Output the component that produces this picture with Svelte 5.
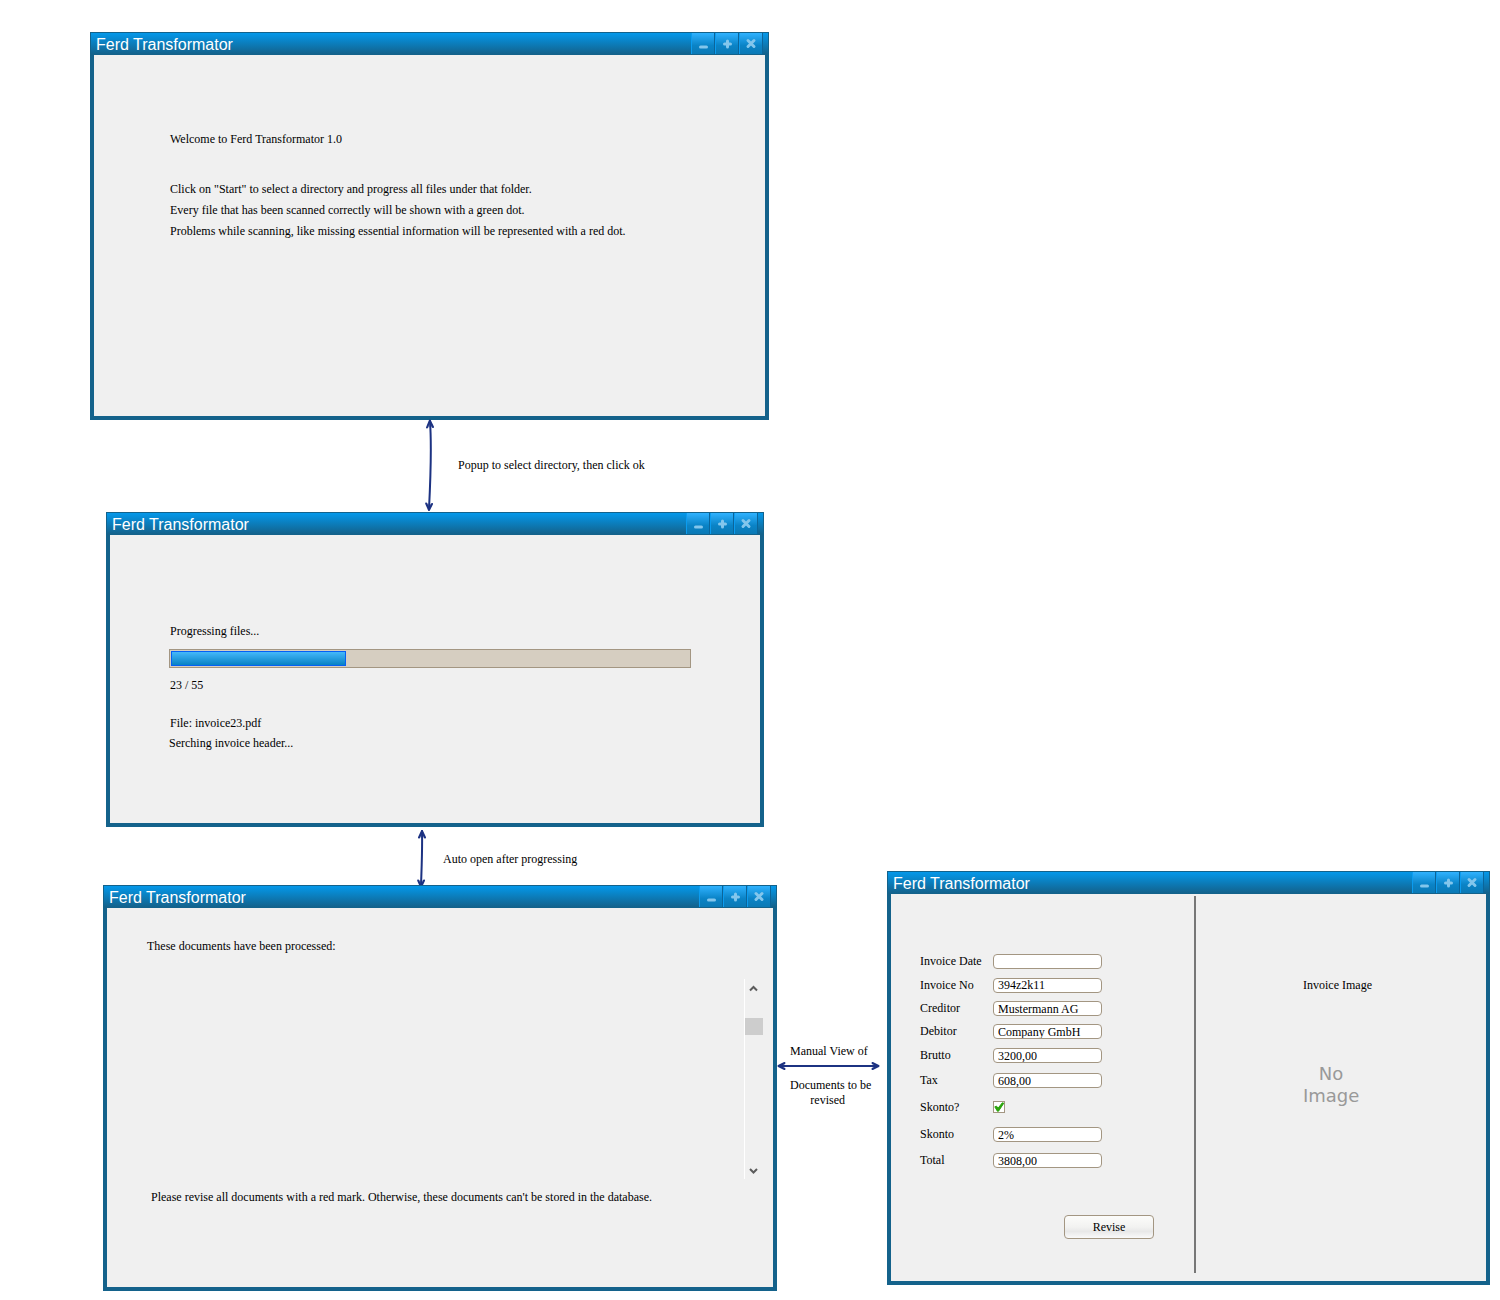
<script>
  const title = 'Ferd Transformator';

  const windows = [
    { id: 'welcome', x: 90, y: 32, w: 679, h: 388 },
    { id: 'progress', x: 106, y: 512, w: 658, h: 315 },
    { id: 'documents', x: 103, y: 885, w: 674, h: 406 },
    { id: 'invoice', x: 887, y: 871, w: 603, h: 414 }
  ];

  const fields = [
    { id: 'date', label: 'Invoice Date', value: '' },
    { id: 'number', label: 'Invoice No', value: '394z2k11' },
    { id: 'creditor', label: 'Creditor', value: 'Mustermann AG' },
    { id: 'debitor', label: 'Debitor', value: 'Company GmbH' },
    { id: 'brutto', label: 'Brutto', value: '3200,00' },
    { id: 'tax', label: 'Tax', value: '608,00' },
    { id: 'has-skonto', label: 'Skonto?', checked: true },
    { id: 'skonto', label: 'Skonto', value: '2%' },
    { id: 'total', label: 'Total', value: '3808,00' }
  ];

  const notes = [
    { x: 458, y: 458, lines: 'Popup to select directory, then click ok' },
    { x: 443, y: 852, lines: 'Auto open after progressing' },
    { x: 790, y: 1044, lines: 'Manual View of' },
    { x: 790, y: 1078, lines: 'Documents to be\nrevised  ' }
  ];
</script>

{#snippet welcome()}
  <div class="body welcome">
    <p class="lead">Welcome to Ferd Transformator 1.0</p>
    <p>Click on "Start" to select a directory and progress all files under that folder.</p>
    <p>Every file that has been scanned correctly will be shown with a green dot.</p>
    <p>Problems while scanning, like missing essential information will be represented with a red dot.</p>
  </div>
{/snippet}

{#snippet progress()}
  <div class="body progress">
    <label for="files">Progressing files...</label>
    <progress id="files" max="1000" value="337"></progress>
    <p class="count">23 / 55</p>
    <p>File: invoice23.pdf</p>
    <p>Serching invoice header...</p>
  </div>
{/snippet}

{#snippet documents()}
  <div class="body documents">
    <p>These documents have been processed:</p>
    <div class="list">
      <div class="scrollbar">
        <button type="button" aria-label="Scroll up">
          <svg viewBox="0 0 18 18"><path d="M5 11.500 8.500 8l3.500 3.500" /></svg>
        </button>
        <div class="track"><div class="thumb"></div></div>
        <button type="button" aria-label="Scroll down">
          <svg viewBox="0 0 18 18"><path d="M5 8l3.500 3.500L12 8" /></svg>
        </button>
      </div>
    </div>
    <p class="hint">Please revise all documents with a red mark. Otherwise, these documents can't be stored in the database.</p>
  </div>
{/snippet}

{#snippet invoice()}
  <div class="body invoice">
    <form class="pane" onsubmit={(e) => e.preventDefault()}>
      <div class="fields">
        {#each fields as f (f.id)}
          <label for={f.id}>{f.label}</label>
          {#if f.checked}
            <span class="check">
              <input id={f.id} type="checkbox" checked />
              <svg viewBox="0 0 12 12" aria-hidden="true"><path d="M1.800 5.800 3.600 5.200 5 7.300 9.300 1.800 10.800 2.200 5.500 10.200 4.400 10.200Z" /></svg>
            </span>
          {:else}
            <input class="text" id={f.id} type="text" value={f.value} />
          {/if}
        {/each}
      </div>
      <button class="revise" type="submit">Revise</button>
    </form>
    <section class="preview">
      <p>Invoice Image</p>
      <div class="empty">No<br />Image</div>
    </section>
  </div>
{/snippet}

<main class="canvas">
  {#each windows as win (win.id)}
    <article class="window" style="left:{win.x}px;top:{win.y}px;width:{win.w}px;height:{win.h}px">
      <header>
        <h2>{title}</h2>
        <button type="button" aria-label="Minimize">
          <svg viewBox="0 0 22 20"><path d="M8.500 13h6" /></svg>
        </button>
        <button type="button" aria-label="Maximize">
          <svg viewBox="0 0 22 20"><path d="M8.500 10h6M11.500 7v6" /></svg>
        </button>
        <button type="button" aria-label="Close">
          <svg viewBox="0 0 22 20"><path d="M8 6.500l6 6M14 6.500l-6 6" /></svg>
        </button>
      </header>
      {#if win.id === 'welcome'}
        {@render welcome()}
      {:else if win.id === 'progress'}
        {@render progress()}
      {:else if win.id === 'documents'}
        {@render documents()}
      {:else}
        {@render invoice()}
      {/if}
    </article>
  {/each}

  <svg class="links" width="900" height="885" viewBox="0 0 900 885" aria-hidden="true">
    <path d="M430 421C432 450 430.500 480 429 509" />
    <path class="head" d="M427 427.500 429.800 420.500 433 427M426.200 503.500 429 510 432 504" />
    <path d="M422 831C422.500 850 421.500 870 421 886" />
    <path class="head" d="M419 837.500 422 831 425 837.500M418.200 880.500 421 887 424 880.500" />
  </svg>
  <svg class="links across" width="106" height="12" viewBox="0 0 106 12" aria-hidden="true">
    <path d="M4 6H103" />
    <path class="head" d="M9.500 3 3.500 6 9.500 9M97.500 3 103.500 6 97.500 9" />
  </svg>

  {#each notes as n}
    <p class="note" style="left:{n.x}px;top:{n.y}px">{n.lines}</p>
  {/each}
</main>

<style>
  :global(body) {
    background: #fff;
  }

  .canvas {
    position: relative;
    min-height: 100vh;
    font: 12px/14px 'Liberation Serif', 'Times New Roman', serif;
    color: #000;
  }

  p,
  h2 {
    margin: 0;
    font-weight: normal;
  }

  button,
  input {
    box-sizing: border-box;
    margin: 0;
    font: inherit;
    color: inherit;
  }

  .links {
    position: absolute;
    left: 0;
    top: 0;
    pointer-events: none;
    fill: none;
    stroke: #1c3282;
    stroke-width: 2;
    stroke-linecap: round;
    stroke-linejoin: round;
  }

  .across {
    left: 775px;
    top: 1060px;
  }

  .head {
    fill: #1c3282;
    fill-opacity: 0.4;
  }

  .note {
    position: absolute;
    white-space: pre;
    line-height: 15px;
    text-align: center;
  }

  .window {
    position: absolute;
    box-sizing: border-box;
    display: flex;
    flex-direction: column;
    background: #f0f0f0;
  }

  header {
    box-sizing: border-box;
    display: flex;
    height: 23px;
    padding-right: 5px;
    border: 1px solid #13628b;
    background: linear-gradient(#0498ea, #13628c);
  }

  h2 {
    flex: 1;
    padding-left: 5px;
    font: 16px/23px 'Liberation Sans', Arial, sans-serif;
    color: #fff;
  }

  header button {
    width: 24px;
    padding: 0;
    border: 0 solid #0b659a;
    border-left: 1px solid #0b9cf0;
    border-right: 1px solid #0b659a;
    background: linear-gradient(#2fb2ff, #0a83c6 60%, #0b79b5);
  }

  header svg {
    display: block;
    width: 22px;
    height: 20px;
    fill: none;
    stroke: #83c6ec;
    stroke-width: 3;
    stroke-linecap: round;
  }

  .body {
    flex: 1;
    border: 4px solid #14628b;
    border-top: 0;
  }

  .welcome {
    padding: 74px 76px;
    line-height: 21px;
  }

  .lead {
    margin-bottom: 29px;
  }

  .progress {
    display: flex;
    flex-direction: column;
    gap: 6px;
    padding: 89px 69px 0 59px;
  }

  .progress label,
  .progress p:not(:last-child) {
    padding-left: 1px;
  }

  progress {
    appearance: none;
    box-sizing: border-box;
    width: 100%;
    height: 19px;
    margin: 5px 0 4px;
    padding: 1px;
    border: 1px solid #a39682;
    background: #d6cec1;
  }

  progress::-webkit-progress-bar {
    background: #d6cec1;
  }

  progress::-webkit-progress-value {
    box-sizing: border-box;
    border: 1px solid #0560f5;
    background: linear-gradient(#45b8fa, #0781c4);
  }

  .count {
    margin-bottom: 18px;
  }

  .documents {
    padding: 31px 10px 0 40px;
  }

  .list {
    display: flex;
    justify-content: flex-end;
    height: 200px;
    margin: 26px 0 11px;
  }

  .scrollbar {
    display: flex;
    flex-direction: column;
    width: 18px;
    border-left: 1px solid #fff;
  }

  .scrollbar button {
    height: 18px;
    padding: 0;
    border: 0;
    background: none;
  }

  .scrollbar svg {
    display: block;
    width: 18px;
    height: 18px;
    fill: none;
    stroke: #5c5c5c;
    stroke-width: 2;
  }

  .track {
    flex: 1;
    padding-top: 21px;
  }

  .thumb {
    height: 17px;
    background: #cdcdcd;
  }

  .hint {
    padding-left: 4px;
  }

  .invoice {
    display: flex;
    padding: 2px 0 8px;
  }

  .pane {
    display: flex;
    flex-direction: column;
    gap: 42px;
    width: 303px;
    box-sizing: border-box;
    padding: 53px 40px 0 29px;
  }

  .fields {
    display: grid;
    grid-template-columns: 73px 109px;
    grid-template-rows: 24px 24px 23px 23px 25px 25px 28px 27px 25px;
    align-items: center;
  }

  .fields label {
    padding-bottom: 1px;
  }

  .text {
    width: 100%;
    height: 15px;
    padding: 1px 4px 0;
    border: 1px solid #a39682;
    border-radius: 4px;
    background: #fff;
  }

  .check {
    display: grid;
    width: 12px;
    height: 12px;
  }

  .check input,
  .check svg {
    grid-area: 1 / 1;
    width: 12px;
    height: 12px;
  }

  .check input {
    appearance: none;
    border: 1px solid #a39682;
    background: #fff;
  }

  .check svg {
    z-index: 1;
    pointer-events: none;
    fill: #2ba40c;
    stroke: #2ba40c;
    stroke-width: 1;
  }

  .revise {
    align-self: flex-end;
    width: 90px;
    height: 24px;
    padding: 0;
    border: 1px solid #a39682;
    border-radius: 4px;
    background: linear-gradient(#fcfcfa, #f2f2f1 50%, #e8e8e8 70%, #fafafa);
  }

  .preview {
    flex: 1;
    padding: 82px 0 0 107px;
    border-left: 2px solid #777;
  }

  .empty {
    width: 56px;
    margin-top: 71px;
    font: 18px/22px 'DejaVu Sans', Verdana, sans-serif;
    text-align: center;
    color: #999;
  }
</style>
